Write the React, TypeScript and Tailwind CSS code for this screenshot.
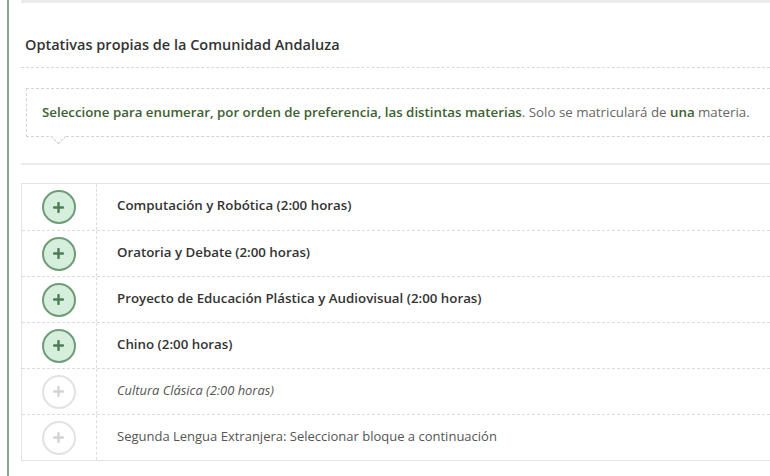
const ITEMS = [
  { label: "Computación y Robótica (2:00 horas)", kind: "active" },
  { label: "Oratoria y Debate (2:00 horas)", kind: "active" },
  { label: "Proyecto de Educación Plástica y Audiovisual (2:00 horas)", kind: "active" },
  { label: "Chino (2:00 horas)", kind: "active" },
  { label: "Cultura Clásica (2:00 horas)", kind: "italic" },
  { label: "Segunda Lengua Extranjera: Seleccionar bloque a continuación", kind: "plain" },
];

function PlusCircle({ active }: { active: boolean }) {
  return (
    <div
      className={
        active
          ? "flex h-[34px] w-[34px] items-center justify-center rounded-full border-2 border-[#6f9c77] bg-[#d6eedc]"
          : "flex h-[34px] w-[34px] items-center justify-center rounded-full border-2 border-[#e2e2e2] bg-white"
      }
    >
      <svg width="11" height="11" viewBox="0 0 11 11">
        <path
          d="M5.5 1v9M1 5.5h9"
          stroke={active ? "#4c7d55" : "#d4d4d4"}
          strokeWidth="2.4"
          strokeLinecap="round"
        />
      </svg>
    </div>
  );
}

export default function App() {
  return (
    <div
      className="h-[476px] w-[770px] overflow-hidden bg-white pl-[7px]"
      style={{ fontFamily: '"Open Sans", "Noto Sans", sans-serif' }}
    >
      <div className="h-full border-l-2 border-[#8aa68a] pl-[12px]">
        {/* top edge of previous block */}
        <div className="h-[3px] bg-[#ebebeb]" />

        {/* Section title */}
        <div className="flex h-[64px] items-center pl-[4px] pt-[20px]">
          <h2 className="text-[14.5px] font-semibold text-[#333]">
            Optativas propias de la Comunidad Andaluza
          </h2>
        </div>
        <div className="border-t border-dashed border-[#d9d9d9]" />

        {/* Callout */}
        <div className="pl-[5px] pt-[20px]">
          <div className="relative flex h-[49px] items-center border border-r-0 border-dashed border-[#d4d4d4] pl-[15px] text-[13.3px] text-[#666]">
            <p className="whitespace-nowrap">
              <span className="font-semibold text-[#3d6132]">
                Seleccione para enumerar, por orden de preferencia, las distintas materias
              </span>
              . Solo se matriculará de{" "}
              <span className="font-semibold text-[#3d6132]">una</span> materia.
            </p>
            <div className="absolute bottom-[-6px] left-[26px] h-[11px] w-[11px] rotate-45 border-b border-r border-dashed border-[#cfcfcf] bg-white" />
          </div>
        </div>

        <div className="mt-[26px] h-[2px] bg-[#ebebeb]" />

        {/* Table */}
        <div className="mt-[18px] border border-r-0 border-[#e3e3e3]">
          {ITEMS.map((it, i) => (
            <div
              key={it.label}
              className={
                i === 0
                  ? "flex h-[46px] items-stretch"
                  : "flex h-[46px] items-stretch border-t border-dashed border-[#dcdcdc]"
              }
            >
              <div className="flex w-[75px] items-center justify-center border-r border-dashed border-[#dcdcdc] pr-[1px]">
                <PlusCircle active={it.kind === "active"} />
              </div>
              <div
                className={
                  it.kind === "active"
                    ? "flex items-center pb-[2px] pl-[20px] text-[13.3px] font-semibold text-[#333]"
                    : it.kind === "italic"
                    ? "flex items-center pb-[2px] pl-[20px] text-[12.9px] italic text-[#555]"
                    : "flex items-center pb-[2px] pl-[20px] text-[13px] text-[#555]"
                }
              >
                {it.label}
              </div>
            </div>
          ))}
        </div>
      </div>
    </div>
  );
}
